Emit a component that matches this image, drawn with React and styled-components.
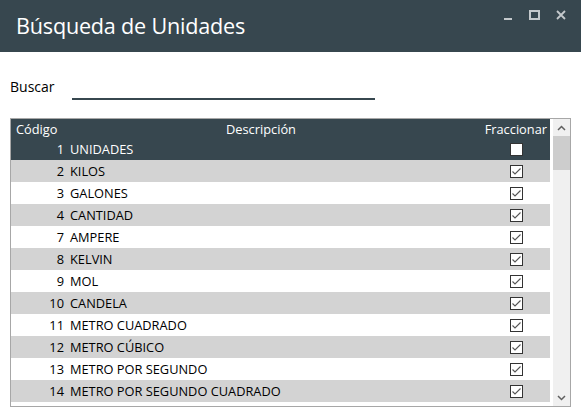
import styled, { createGlobalStyle } from "styled-components";

const GlobalStyle = createGlobalStyle`
    html, body {
        margin: 0;
        padding: 0;
        background: #ffffff;
    }
    body {
        font-family: "Open Sans", "Noto Sans", sans-serif;
        color: #000;
    }
`;

const units = [
    { code: 1, name: "UNIDADES", frac: false },
    { code: 2, name: "KILOS", frac: true },
    { code: 3, name: "GALONES", frac: true },
    { code: 4, name: "CANTIDAD", frac: true },
    { code: 7, name: "AMPERE", frac: true },
    { code: 8, name: "KELVIN", frac: true },
    { code: 9, name: "MOL", frac: true },
    { code: 10, name: "CANDELA", frac: true },
    { code: 11, name: "METRO CUADRADO", frac: true },
    { code: 12, name: "METRO CÚBICO", frac: true },
    { code: 13, name: "METRO POR SEGUNDO", frac: true },
    { code: 14, name: "METRO POR SEGUNDO CUADRADO", frac: true },
];

const Window = styled.div`
    width: 581px;
    height: 411px;
    display: flex;
    flex-direction: column;
    overflow: hidden;
`;

const TitleBar = styled.div`
    height: 52px;
    background: #37474f;
    display: flex;
    align-items: flex-start;
    justify-content: space-between;
    padding-left: 16px;
    box-sizing: border-box;
`;

const Title = styled.h1`
    margin: 0;
    padding-top: 11px;
    font-size: 21.6px;
    font-weight: 400;
    color: #ffffff;
    letter-spacing: -0.2px;
`;

const Controls = styled.div`
    display: flex;
    gap: 16px;
    padding: 9px 15px 0 0;
    align-items: center;
`;

const Body = styled.div`
    flex: 1;
    display: flex;
    flex-direction: column;
    padding: 0 10px 0 10px;
`;

const SearchRow = styled.div`
    display: flex;
    align-items: center;
    height: 66px;
    padding-top: 2px;
    box-sizing: border-box;
`;

const SearchLabel = styled.label`
    font-size: 14px;
    width: 62px;
`;

const SearchInput = styled.input`
    width: 303px;
    border: none;
    border-bottom: 2px solid #37474f;
    outline: none;
    height: 24px;
    margin-top: 2px;
    padding: 0;
    font-family: inherit;
    font-size: 14px;
    background: transparent;
`;

const Grid = styled.div`
    height: 289px;
    border: 1px solid #a7a7a7;
    display: flex;
    box-sizing: border-box;
`;

const Rows = styled.div`
    flex: 1;
    display: flex;
    flex-direction: column;
    padding-right: 3px;
`;

const Row = styled.div`
    display: grid;
    grid-template-columns: 53px 1fr 92px;
    height: ${({ $head }) => ($head ? "19px" : "22px")};
    align-items: center;
    font-size: 12.8px;
    background: ${({ $tone }) =>
        $tone === "dark" ? "#37474f" : $tone === "gray" ? "#d3d3d3" : "#ffffff"};
    color: ${({ $tone }) => ($tone === "dark" ? "#ffffff" : "#000000")};
`;

const Cell = styled.div`
    padding: ${({ $pad }) => $pad || "0"};
    white-space: nowrap;
    display: flex;
    justify-content: ${({ $align }) =>
        $align === "right" ? "flex-end" : $align === "center" ? "center" : "flex-start"};
`;

const Box = styled.span`
    width: 13px;
    height: 13px;
    box-sizing: border-box;
    border: 1px solid #333333;
    background: #ffffff;
    display: flex;
    align-items: center;
    justify-content: center;
`;

const Scrollbar = styled.div`
    width: 17px;
    background: #f0f0f0;
    display: flex;
    flex-direction: column;
    align-items: center;
`;

const Arrow = styled.div`
    height: 17px;
    width: 17px;
    display: flex;
    align-items: center;
    justify-content: center;
`;

const Thumb = styled.div`
    width: 17px;
    height: 34px;
    background: #cdcdcd;
`;

const Track = styled.div`
    flex: 1;
`;

const CheckBox = ({ checked }) => (
    <Box>
        {checked && (
            <svg width="11" height="11" viewBox="0 0 11 11">
                <path d="M1.5 5.5 L4 8 L9.5 2.5" fill="none" stroke="#555" strokeWidth="1.1" />
            </svg>
        )}
    </Box>
);

const Chevron = ({ up }) => (
    <svg width="9" height="6" viewBox="0 0 9 6">
        <path
            d={up ? "M1 5 L4.5 1.5 L8 5" : "M1 1 L4.5 4.5 L8 1"}
            fill="none"
            stroke="#606060"
            strokeWidth="1.5"
        />
    </svg>
);

export default function App() {
    return (
        <>
            <GlobalStyle />
            <Window>
                <TitleBar>
                    <Title>Búsqueda de Unidades</Title>
                    <Controls>
                        <svg width="10" height="12" viewBox="0 0 10 12">
                            <rect x="1" y="9" width="8" height="2" fill="#c4c9cc" />
                        </svg>
                        <svg width="11" height="10" viewBox="0 0 11 10">
                            <rect x="1" y="1" width="9" height="8" fill="none" stroke="#c4c9cc" strokeWidth="2" />
                        </svg>
                        <svg width="10" height="10" viewBox="0 0 10 10">
                            <path d="M1 1 L9 9 M9 1 L1 9" stroke="#c4c9cc" strokeWidth="1.8" />
                        </svg>
                    </Controls>
                </TitleBar>
                <Body>
                    <SearchRow>
                        <SearchLabel>Buscar</SearchLabel>
                        <SearchInput />
                    </SearchRow>
                    <Grid>
                        <Rows>
                            <Row $head $tone="dark">
                                <Cell $pad="0 0 0 5px">Código</Cell>
                                <Cell $align="center">Descripción</Cell>
                                <Cell $align="right" $pad="0 3px 0 0">Fraccionar</Cell>
                            </Row>
                            {units.map((u, i) => (
                                <Row key={u.code} $tone={i === 0 ? "dark" : i % 2 === 1 ? "gray" : "white"}>
                                    <Cell $align="right">{u.code}</Cell>
                                    <Cell $pad="0 0 0 6px">{u.name}</Cell>
                                    <Cell $align="center" $pad="0 0 0 24px">
                                        <CheckBox checked={u.frac} />
                                    </Cell>
                                </Row>
                            ))}
                        </Rows>
                        <Scrollbar>
                            <Arrow><Chevron up /></Arrow>
                            <Thumb />
                            <Track />
                            <Arrow><Chevron /></Arrow>
                        </Scrollbar>
                    </Grid>
                </Body>
            </Window>
        </>
    );
}
